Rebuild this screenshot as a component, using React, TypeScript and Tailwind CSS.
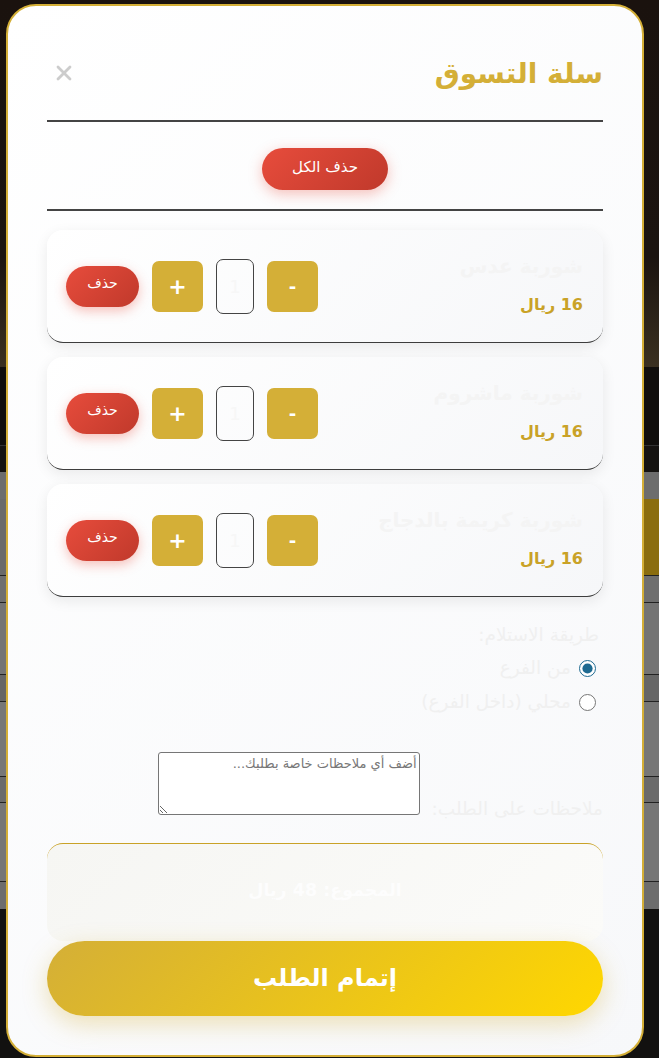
import { X } from 'lucide-react'

const items = [
  { name: 'شوربة عدس', price: 16, qty: 1 },
  { name: 'شوربة ماشروم', price: 16, qty: 1 },
  { name: 'شوربة كريمة بالدجاج', price: 16, qty: 1 },
]

const font = { fontFamily: '"DejaVu Sans", "Noto Sans", sans-serif' }

function Backdrop() {
  return (
    <div className="w-full">
      <div className="h-[367px] bg-[linear-gradient(180deg,#1a120e_0%,#1b1410_70%,#3a3020_100%)]" />
      <div className="h-[79px] bg-[#100e0c] border-b border-[#333]" />
      <div className="h-[26px] bg-[#151311]" />
      <div className="h-[27px] bg-[#6d6d6d]" />
      <div className="h-[77px] bg-[#6a6a6a] flex justify-end border-b border-[#222]">
        <div className="w-[320px] bg-[#8a6d0f] flex items-center justify-end text-[#c9b36b] text-xl font-bold overflow-hidden" dir="rtl">
          <span className="-mr-[8px]">أضف</span>
        </div>
      </div>
      <div className="h-[27px] bg-[#6f6f6f] border-b border-[#222]" />
      <div className="h-[72px] bg-[#747474] border-b border-[#222]" />
      <div className="h-[27px] bg-[#666] border-b border-[#222]" />
      <div className="h-[75px] bg-[#777] border-b border-[#222]" />
      <div className="h-[26px] bg-[#6b6b6b] border-b border-[#222]" />
      <div className="h-[79px] bg-[#767676] border-b border-[#222]" />
      <div className="h-[27px] bg-[#6d6d6d]" />
      <div className="h-[149px] bg-[#121110]" />
    </div>
  )
}

function CartItem({ name, price, qty }: { name: string; price: number; qty: number }) {
  return (
    <div className="h-[113px] flex items-center justify-between pr-[20px] pl-[19px] rounded-[16px] bg-[linear-gradient(135deg,#ffffff,#f6f7f9)] border-b-[1.5px] border-[#3d3d3d] shadow-[0_4px_14px_rgba(0,0,0,0.08)]">
      <div className="flex flex-col gap-[14px] pb-[2px]">
        <div className="text-[20px] font-bold text-[#f4f4f4] leading-[26px]">{name}</div>
        <div className="text-[16px] font-bold text-[#c9a227] leading-[24px]">{price} ريال</div>
      </div>
      <div className="flex items-center gap-[13px]">
        <button className="w-[51px] h-[51px] rounded-[7px] bg-[#d4af37] text-white text-[18px] font-bold">-</button>
        <div className="w-[38px] h-[55px] rounded-[7px] border-[1.5px] border-[#444] flex items-center justify-center text-[#f7f7f7] text-[18px]">{qty}</div>
        <button className="w-[51px] h-[51px] rounded-[7px] bg-[#d4af37] text-white text-[22px] font-bold">+</button>
        <button className="w-[73px] h-[41px] rounded-full bg-[linear-gradient(135deg,#e74c3c,#c0392b)] text-white text-[14px] pb-[6px] shadow-[0_4px_12px_rgba(231,76,60,0.35)]">حذف</button>
      </div>
    </div>
  )
}

export default function App() {
  return (
    <div className="relative w-[659px] h-[1058px] overflow-hidden" style={font}>
      <Backdrop />
      <div
        dir="rtl"
        className="absolute left-[6px] top-[4px] w-[638px] h-[1053px] rounded-[30px] border-2 border-[#d4af37] bg-[linear-gradient(135deg,#ffffff,#f7f8fa)] px-[39px] pt-[45px] overflow-hidden"
      >
        <div className="flex items-center justify-between pb-[23px] border-b-2 border-[#444]">
          <h2 className="text-[28px] font-bold text-[#d4af37] leading-[46px]">سلة التسوق</h2>
          <button className="text-[#cccccc] ml-[5px] mt-[-2px]">
            <X size={24} strokeWidth={2.75} />
          </button>
        </div>

        <div className="flex justify-center pt-[26px] pb-[19px] border-b-2 border-[#444]">
          <button className="w-[126px] h-[42px] rounded-full bg-[linear-gradient(135deg,#e74c3c,#c0392b)] text-white text-[15px] pb-[4px] shadow-[0_4px_14px_rgba(231,76,60,0.35)]">
            حذف الكل
          </button>
        </div>

        <div className="flex flex-col gap-[14px] mt-[19px]">
          {items.map((item, i) => (
            <CartItem key={i} {...item} />
          ))}
        </div>

        <div className="mt-[25px] pr-[4px] text-[18.5px] text-[#f0f0f0]">
          <div className="leading-[26px]">طريقة الاستلام:</div>
          <label className="flex items-center gap-[8px] mt-[7px] leading-[26px] pr-[3px]">
            <input type="radio" name="pickup" defaultChecked className="w-[17px] h-[17px] accent-[#1e6a91]" />
            من الفرع
          </label>
          <label className="flex items-center gap-[8px] mt-[8px] leading-[26px] pr-[3px]">
            <input type="radio" name="pickup" className="w-[17px] h-[17px] accent-[#1e6a91]" />
            محلي (داخل الفرع)
          </label>
        </div>

        <div className="mt-[37px] text-[18.5px] text-[#f0f0f0]">
          <label className="ml-[12px]">ملاحظات على الطلب:</label>
          <textarea
            placeholder="أضف أي ملاحظات خاصة بطلبك..."
            className="w-[262px] h-[63px] align-baseline border border-[#767676] rounded-[3px] bg-white px-[2px] py-[1px] text-[13px] placeholder:text-[#777]"
          />
        </div>

        <div className="mt-[20px] h-[98px] rounded-[16px] border-t-[1.5px] border-[#c9a227] bg-[linear-gradient(135deg,#f6f6f3,#fbfbf9)] flex items-center justify-center pb-[4px]">
          <span className="text-[17.5px] font-bold text-[#fdfdfd]">المجموع: 48 ريال</span>
        </div>

        <button className="w-full h-[75px] rounded-full bg-[linear-gradient(135deg,#d4af37,#ffd700)] text-white text-[24px] font-bold shadow-[0_8px_24px_rgba(212,175,55,0.35)]">
          إتمام الطلب
        </button>
      </div>
    </div>
  )
}
